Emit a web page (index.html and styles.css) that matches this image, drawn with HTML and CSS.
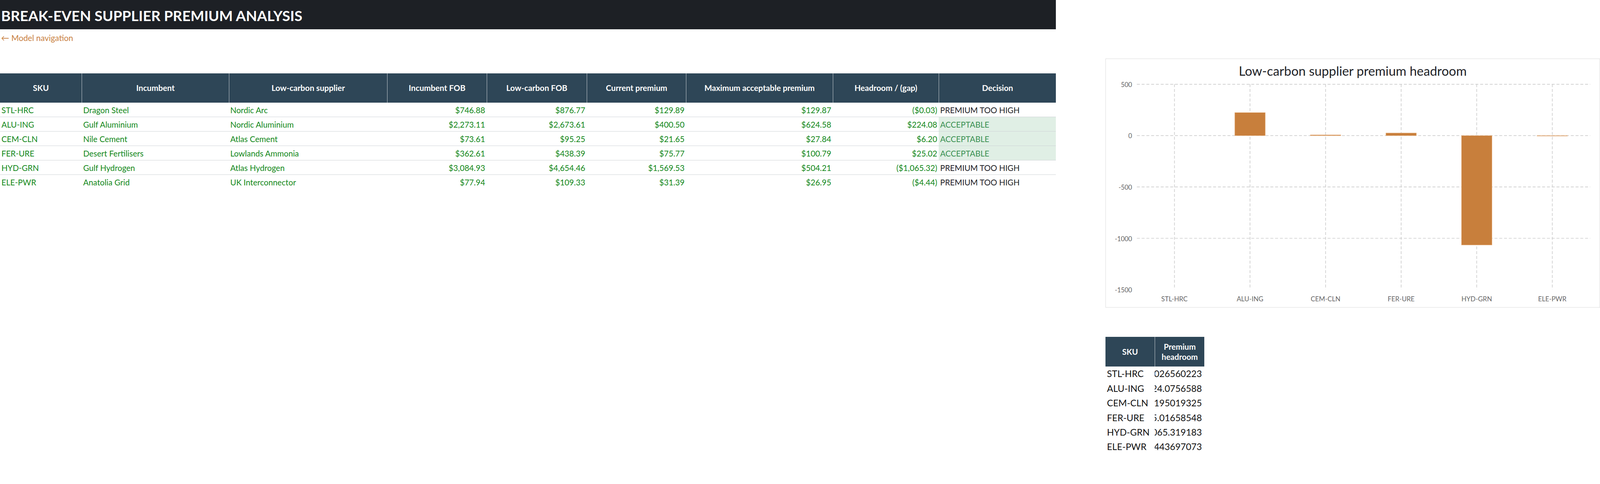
FILE: index.html
```html
<!DOCTYPE html>
<html lang="en">
<head>
<meta charset="utf-8">
<title>Break-even supplier premium analysis</title>
<link rel="stylesheet" href="styles.css">
</head>
<body>
<div class="page">
  <div class="left">
    <header class="topbar"><h1 class="title">BREAK-EVEN SUPPLIER PREMIUM ANALYSIS</h1></header>
    <a class="nav" href="#">← Model navigation</a>
    <table class="main">
      <colgroup>
        <col class="c-sku"><col class="c-inc"><col class="c-low"><col class="c-ifob"><col class="c-lfob"><col class="c-cur"><col class="c-max"><col class="c-head"><col class="c-dec">
      </colgroup>
      <thead>
        <tr>
          <th>SKU</th><th>Incumbent</th><th>Low-carbon supplier</th><th>Incumbent FOB</th><th>Low-carbon FOB</th><th>Current premium</th><th>Maximum acceptable premium</th><th>Headroom / (gap)</th><th>Decision</th>
        </tr>
      </thead>
      <tbody>
        <tr>
          <td class="g">STL-HRC</td><td class="g">Dragon Steel</td><td class="g">Nordic Arc</td><td class="g r">$746.88</td><td class="g r">$876.77</td><td class="g r">$129.89</td><td class="g r">$129.87</td><td class="g r">($0.03)</td><td class="dec">PREMIUM TOO HIGH</td>
        </tr>
        <tr>
          <td class="g">ALU-ING</td><td class="g">Gulf Aluminium</td><td class="g">Nordic Aluminium</td><td class="g r">$2,273.11</td><td class="g r">$2,673.61</td><td class="g r">$400.50</td><td class="g r">$624.58</td><td class="g r">$224.08</td><td class="dec ok">ACCEPTABLE</td>
        </tr>
        <tr>
          <td class="g">CEM-CLN</td><td class="g">Nile Cement</td><td class="g">Atlas Cement</td><td class="g r">$73.61</td><td class="g r">$95.25</td><td class="g r">$21.65</td><td class="g r">$27.84</td><td class="g r">$6.20</td><td class="dec ok">ACCEPTABLE</td>
        </tr>
        <tr>
          <td class="g">FER-URE</td><td class="g">Desert Fertilisers</td><td class="g">Lowlands Ammonia</td><td class="g r">$362.61</td><td class="g r">$438.39</td><td class="g r">$75.77</td><td class="g r">$100.79</td><td class="g r">$25.02</td><td class="dec ok">ACCEPTABLE</td>
        </tr>
        <tr>
          <td class="g">HYD-GRN</td><td class="g">Gulf Hydrogen</td><td class="g">Atlas Hydrogen</td><td class="g r">$3,084.93</td><td class="g r">$4,654.46</td><td class="g r">$1,569.53</td><td class="g r">$504.21</td><td class="g r">($1,065.32)</td><td class="dec">PREMIUM TOO HIGH</td>
        </tr>
        <tr>
          <td class="g">ELE-PWR</td><td class="g">Anatolia Grid</td><td class="g">UK Interconnector</td><td class="g r">$77.94</td><td class="g r">$109.33</td><td class="g r">$31.39</td><td class="g r">$26.95</td><td class="g r">($4.44)</td><td class="dec">PREMIUM TOO HIGH</td>
        </tr>
      </tbody>
    </table>
  </div>

  <div class="right">
    <div class="chart-card">
      <svg class="chart" viewBox="3016.5 161.5 1346 677" preserveAspectRatio="none" xmlns="http://www.w3.org/2000/svg">
        <text class="chart-title" x="3689.5" y="207.5" text-anchor="middle">Low-carbon supplier premium headroom</text>
        <g class="grid">
          <line x1="3101" y1="230.5" x2="4337" y2="230.5"/>
          <line x1="3101" y1="370.5" x2="4337" y2="370.5"/>
          <line x1="3101" y1="510.5" x2="4337" y2="510.5"/>
          <line x1="3101" y1="650.5" x2="4337" y2="650.5"/>
          <line x1="3203.5" y1="230.5" x2="3203.5" y2="790"/>
          <line x1="3409.5" y1="230.5" x2="3409.5" y2="790"/>
          <line x1="3615.5" y1="230.5" x2="3615.5" y2="790"/>
          <line x1="3821.5" y1="230.5" x2="3821.5" y2="790"/>
          <line x1="4027.5" y1="230.5" x2="4027.5" y2="790"/>
          <line x1="4233.5" y1="230.5" x2="4233.5" y2="790"/>
        </g>
        <g class="ylab">
          <text x="3088" y="238">500</text>
          <text x="3088" y="378">0</text>
          <text x="3088" y="518">-500</text>
          <text x="3088" y="658">-1000</text>
          <text x="3088" y="798">-1500</text>
        </g>
        <g class="xlab">
          <text x="3203.5" y="822.5">STL-HRC</text>
          <text x="3409.5" y="822.5">ALU-ING</text>
          <text x="3615.5" y="822.5">CEM-CLN</text>
          <text x="3821.5" y="822.5">FER-URE</text>
          <text x="4027.5" y="822.5">HYD-GRN</text>
          <text x="4233.5" y="822.5">ELE-PWR</text>
        </g>
        <g class="bars">
          <rect class="zero" x="3162" y="370.5" width="83" height="0.01"/>
          <rect x="3368" y="307.76" width="83" height="62.74"/>
          <rect x="3574" y="368.76" width="83" height="1.74"/>
          <rect x="3780" y="363.5" width="83" height="7"/>
          <rect x="3986" y="370.5" width="83" height="298.29"/>
          <rect x="4192" y="370.5" width="83" height="1.24"/>
        </g>
      </svg>
    </div>

    <table class="mini">
      <colgroup><col class="m-sku"><col class="m-val"></colgroup>
      <thead>
        <tr><th>SKU</th><th class="sep">Premium headroom</th></tr>
      </thead>
      <tbody>
        <tr><td class="msku">STL-HRC</td><td class="mval"><div class="clip"><span>-0.026560223</span></div></td></tr>
        <tr><td class="msku">ALU-ING</td><td class="mval"><div class="clip"><span>224.0756588</span></div></td></tr>
        <tr><td class="msku">CEM-CLN</td><td class="mval"><div class="clip"><span>6.195019325</span></div></td></tr>
        <tr><td class="msku">FER-URE</td><td class="mval"><div class="clip"><span>25.01658548</span></div></td></tr>
        <tr><td class="msku">HYD-GRN</td><td class="mval"><div class="clip"><span>-1065.319183</span></div></td></tr>
        <tr><td class="msku">ELE-PWR</td><td class="mval"><div class="clip"><span>-4.443697073</span></div></td></tr>
      </tbody>
    </table>
  </div>
</div>
</body>
</html>
```

FILE: styles.css
```css
* { box-sizing: border-box; }

html, body {
  margin: 0;
  padding: 0;
  background: #ffffff;
}

body {
  font-family: Lato, "Open Sans", "Liberation Sans", sans-serif;
  color: #1e2127;
}

.page {
  display: grid;
  grid-template-columns: 66% 1fr;
  column-gap: 126.7px;
  align-items: start;
}

/* ---------- left column ---------- */
.topbar {
  height: 75px;
  background: #1d2025;
  padding: 17.3px 0 0 2.8px;
}

.title {
  margin: 0;
  font-size: 37px;
  line-height: 45px;
  font-weight: 700;
  color: #ffffff;
  white-space: nowrap;
}

.nav {
  display: block;
  margin-top: 9.9px;
  padding-left: 2.8px;
  height: 24.4px;
  font-size: 20.8px;
  line-height: 24.4px;
  color: #c8803f;
  text-decoration: none;
}

.main {
  margin-top: 78.4px;
  width: 100%;
  table-layout: fixed;
  border-collapse: separate;
  border-spacing: 0;
  font-size: 20.65px;
}

.c-sku { width: 209.3px; }
.c-inc { width: 376.4px; }
.c-low { width: 405.5px; }
.c-ifob { width: 254.4px; }
.c-lfob { width: 256.2px; }
.c-cur { width: 254.4px; }
.c-max { width: 375.4px; }
.c-head { width: 271.3px; }
.c-dec { width: 300.3px; }

.main th {
  height: 75.1px;
  padding: 0 3.75px;
  background: #2e4657;
  color: #ffffff;
  font-weight: 700;
  font-size: 20.65px;
  line-height: 24.4px;
  text-align: center;
  vertical-align: middle;
  white-space: nowrap;
}

.main th + th {
  border-left: 1.9px solid #c3c9cf;
}

.main td {
  padding: 1.9px 3.75px 0 3.75px;
  line-height: 34.1px;
  border-bottom: 1.5px solid #cfd3d7;
  white-space: nowrap;
  text-align: left;
}

.main tbody tr:last-child td {
  border-bottom: 0;
  padding-bottom: 1.5px;
}

.main td.g { color: #13881a; }
.main td.r { text-align: right; }

.main td.dec { color: #1e2127; }
.main td.dec.ok {
  background: #e0efe5;
  color: #3b9153;
}

/* ---------- right column ---------- */
.chart-card {
  margin-top: 150.2px;
  width: 100%;
  height: 638.2px;
  border: 1.4px solid #dcdcdc;
  background: #ffffff;
}

.chart {
  display: block;
  width: 100%;
  height: 100%;
}

.chart-title {
  font-family: Lato, "Liberation Sans", sans-serif;
  font-size: 35px;
  fill: #1e2227;
}

.grid line {
  stroke: #cdcdcd;
  stroke-width: 1.8;
  stroke-dasharray: 8 5;
}

.ylab text {
  font-family: Lato, "Liberation Sans", sans-serif;
  font-size: 17.5px;
  fill: #666666;
  text-anchor: end;
}

.xlab text {
  font-family: Lato, "Liberation Sans", sans-serif;
  font-size: 18px;
  fill: #666666;
  text-anchor: middle;
}

.bars rect {
  fill: #c87f3c;
  stroke: #e4ad7a;
  stroke-width: 1;
}

.bars rect.zero {
  stroke: none;
}

.mini {
  margin-top: 75.1px;
  width: 253.4px;
  table-layout: fixed;
  border-collapse: separate;
  border-spacing: 0;
}

.m-sku { width: 125.8px; }
.m-val { width: 127.6px; }

.mini th {
  height: 75.1px;
  padding: 0 3.75px;
  background: #2e4657;
  color: #ffffff;
  font-size: 20.5px;
  font-weight: 700;
  line-height: 26.3px;
  text-align: center;
  vertical-align: middle;
}

.mini th.sep {
  border-left: 1.9px solid #c3c9cf;
}

.mini td {
  font-size: 23.5px;
  line-height: 35.5px;
  padding: 1.9px 0 0 0;
  color: #111111;
  white-space: nowrap;
}

.mini td.msku {
  padding-left: 3.75px;
  overflow: hidden;
}

.clip {
  display: flex;
  justify-content: flex-end;
  overflow: hidden;
  white-space: nowrap;
  padding-right: 6.6px;
}

.clip span {
  flex: none;
}
```
